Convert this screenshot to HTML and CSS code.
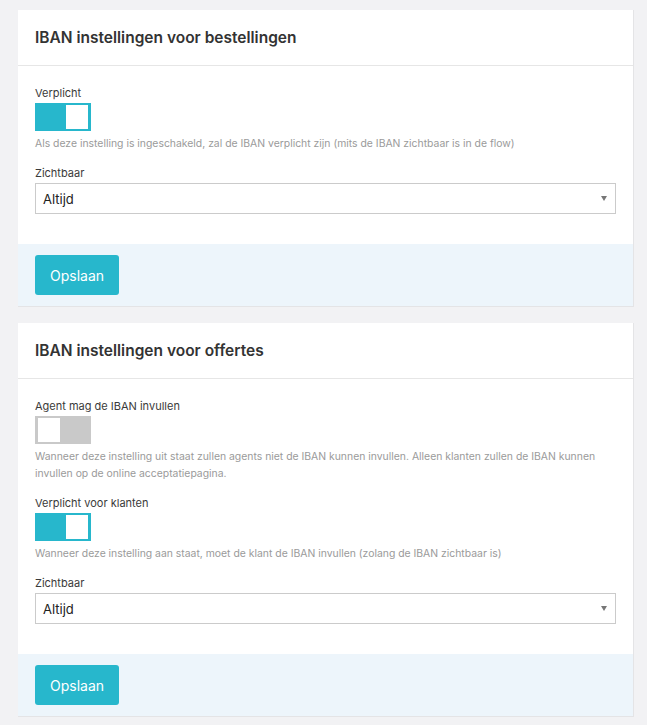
FILE: index.html
```html
<!DOCTYPE html>
<html lang="nl">
<head>
<meta charset="utf-8">
<link rel="stylesheet" href="styles.css">
</head>
<body>
<div class="page">
  <section class="card">
    <header class="card-head"><h2>IBAN instellingen voor bestellingen</h2></header>
    <div class="card-body">
      <div class="field">
        <div class="label">Verplicht</div>
        <div class="toggle on"><span class="knob"></span></div>
        <div class="help">Als deze instelling is ingeschakeld, zal de IBAN verplicht zijn (mits de IBAN zichtbaar is in de flow)</div>
      </div>
      <div class="field">
        <div class="label">Zichtbaar</div>
        <div class="select"><span>Altijd</span><span class="arrow"></span></div>
      </div>
    </div>
    <footer class="card-foot"><button class="btn">Opslaan</button></footer>
  </section>

  <section class="card">
    <header class="card-head"><h2>IBAN instellingen voor offertes</h2></header>
    <div class="card-body">
      <div class="field">
        <div class="label">Agent mag de IBAN invullen</div>
        <div class="toggle off"><span class="knob"></span></div>
        <div class="help">Wanneer deze instelling uit staat zullen agents niet de IBAN kunnen invullen. Alleen klanten zullen de IBAN kunnen invullen op de online acceptatiepagina.</div>
      </div>
      <div class="field">
        <div class="label">Verplicht voor klanten</div>
        <div class="toggle on"><span class="knob"></span></div>
        <div class="help">Wanneer deze instelling aan staat, moet de klant de IBAN invullen (zolang de IBAN zichtbaar is)</div>
      </div>
      <div class="field">
        <div class="label">Zichtbaar</div>
        <div class="select"><span>Altijd</span><span class="arrow"></span></div>
      </div>
    </div>
    <footer class="card-foot"><button class="btn">Opslaan</button></footer>
  </section>
</div>
</body>
</html>
```

FILE: styles.css
```css
html, body {
  margin: 0;
  padding: 0;
  background: #f2f2f4;
  font-family: Inter, "Noto Sans", "Liberation Sans", sans-serif;
}
.page {
  padding: 10px 13px 0 18px;
  display: flex;
  flex-direction: column;
  gap: 16px;
}
.card {
  background: #fff;
  border-right: 1px solid #e4e4e6;
  border-bottom: 1px solid #e4e4e6;
}
.card-head {
  height: 55px;
  border-bottom: 1px solid #e6e6e6;
  display: flex;
  align-items: center;
  padding: 0 17px;
}
.card-head h2 {
  margin: 0;
  font-size: 15.5px;
  font-weight: 600;
  color: #333;
}
.card-body {
  padding: 19px 17px 17px 17px;
}
.field {
  margin-bottom: 13px;
}
.field:last-child {
  margin-bottom: 13px;
}
.label {
  font-size: 11px;
  line-height: 16px;
  color: #3a3a3a;
  margin-bottom: 2px;
}
.toggle {
  width: 56px;
  height: 28px;
  box-sizing: border-box;
  padding: 2px 3px;
  display: flex;
}
.toggle .knob {
  width: 22px;
  height: 24px;
  background: #fff;
  display: block;
}
.toggle.on {
  background: #27b7cc;
  justify-content: flex-end;
}
.toggle.off {
  background: #c9c9c9;
  justify-content: flex-start;
}
.help {
  margin-top: 4px;
  font-size: 10.4px;
  line-height: 17px;
  color: #9a9a9a;
}
.select {
  margin-top: 1px;
  height: 31px;
  box-sizing: border-box;
  border: 1px solid #cbcbcb;
  display: flex;
  align-items: center;
  justify-content: space-between;
  padding: 0 8px 0 7px;
  font-size: 13px;
  color: #222;
}
.select .arrow {
  width: 0;
  height: 0;
  border-left: 3px solid transparent;
  border-right: 3px solid transparent;
  border-top: 5px solid #777;
}
.card-foot {
  background: #edf5fb;
  padding: 11px 17px;
}
.btn {
  display: block;
  width: 84px;
  height: 40px;
  border: 0;
  border-radius: 3px;
  background: #27b7cc;
  color: #fff;
  font-family: inherit;
  font-size: 14px;
  padding: 0;
}
```
